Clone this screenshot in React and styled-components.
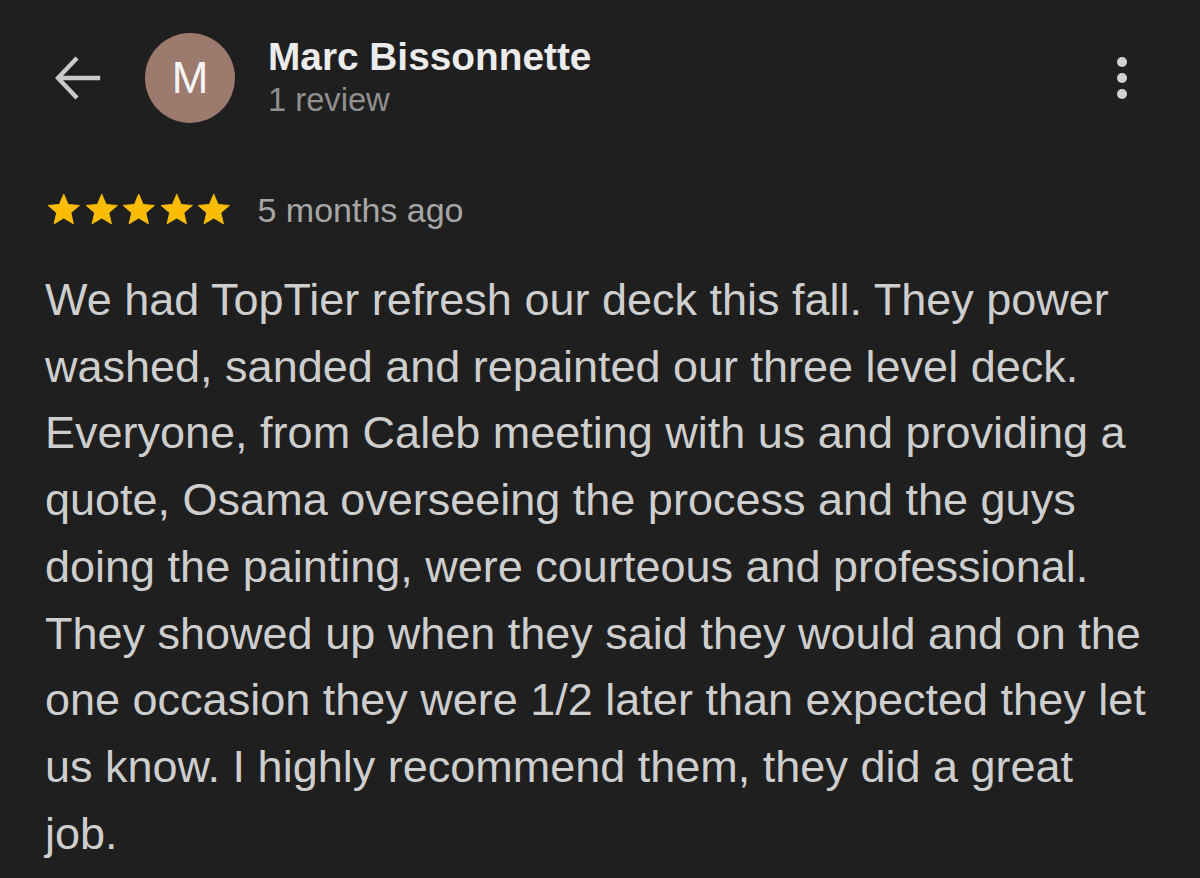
import React from "react";
import styled, { createGlobalStyle } from "styled-components";

const Global = createGlobalStyle`
  html, body { margin: 0; padding: 0; background: #1f1f1f; }
  body { font-family: "Liberation Sans", Arial, Helvetica, sans-serif; }
`;

const Page = styled.div`
  min-height: 878px;
  box-sizing: border-box;
  padding: 33px 48px 0 45px;
  background: #1f1f1f;
`;

const Header = styled.header`
  display: flex;
  align-items: center;
  height: 90px;
`;

const IconButton = styled.button`
  display: flex;
  align-items: center;
  justify-content: center;
  background: none;
  border: 0;
  padding: 0;
  margin: 0;
  color: #cacaca;
  cursor: pointer;
`;

const BackButton = styled(IconButton)`
  margin-left: 10px;
  width: 46px;
  height: 46px;
`;

const Avatar = styled.div`
  margin-left: 44px;
  width: 90px;
  height: 90px;
  border-radius: 50%;
  background: #9c7a6e;
  color: #f4f4f4;
  display: flex;
  align-items: center;
  justify-content: center;
  font-size: 44px;
  line-height: 1;
`;

const Info = styled.div`
  margin-left: 33px;
  display: flex;
  flex-direction: column;
`;

const Name = styled.div`
  color: #ececec;
  font-size: 38.8px;
  font-weight: 700;
  line-height: 44px;
`;

const Sub = styled.div`
  color: #8f8f8f;
  font-size: 32.7px;
  line-height: 42px;
`;

const MoreButton = styled(IconButton)`
  margin-left: auto;
  margin-right: 20px;
  width: 20px;
  height: 60px;
  flex-direction: column;
  gap: 6px;
`;

const Dot = styled.span`
  width: 10px;
  height: 10px;
  border-radius: 50%;
  background: #d2d2d2;
`;

const RatingRow = styled.div`
  display: flex;
  align-items: center;
  margin-top: 67px;
  height: 40px;
`;

const Stars = styled.div`
  display: flex;
  gap: 0;
`;

const Date = styled.span`
  margin-left: 25px;
  color: #a6a6a6;
  font-size: 34px;
  line-height: 40px;
`;

const Body = styled.p`
  margin: 37px 0 0;
  color: #cecece;
  font-size: 45px;
  line-height: 66.7px;
  max-width: 1106px;
`;

const Star = () => (
  <svg width="37.5" height="37.5" viewBox="0 0 24 24">
    <path
      d="M12 17.27L18.18 21l-1.64-7.03L22 9.24l-7.19-.61L12 2 9.19 8.63 2 9.24l5.46 4.73L5.82 21z"
      fill="#fbbc04"
      stroke="#fbbc04"
      strokeWidth="0.6"
      strokeLinejoin="round"
    />
  </svg>
);

const text =
  "We had TopTier refresh our deck this fall. They power washed, sanded and repainted our three level deck. Everyone, from Caleb meeting with us and providing a quote, Osama overseeing the process and the guys doing the painting, were courteous and professional. They showed up when they said they would and on the one occasion they were 1/2 later than expected they let us know. I highly recommend them, they did a great job.";

export default function App() {
  return (
    <>
      <Global />
      <Page>
        <Header>
          <BackButton aria-label="Back">
            <svg width="46" height="46" viewBox="0 0 46 46" fill="none" stroke="#cacaca" strokeWidth="4.4" strokeLinecap="square">
              <path d="M43 23H5" />
              <path d="M20.5 4.5L3 23l17.5 18.5" />
            </svg>
          </BackButton>
          <Avatar>M</Avatar>
          <Info>
            <Name>Marc Bissonnette</Name>
            <Sub>1 review</Sub>
          </Info>
          <MoreButton aria-label="More">
            <Dot />
            <Dot />
            <Dot />
          </MoreButton>
        </Header>
        <RatingRow>
          <Stars>
            {[0, 1, 2, 3, 4].map((i) => (
              <Star key={i} />
            ))}
          </Stars>
          <Date>5 months ago</Date>
        </RatingRow>
        <Body>{text}</Body>
      </Page>
    </>
  );
}
